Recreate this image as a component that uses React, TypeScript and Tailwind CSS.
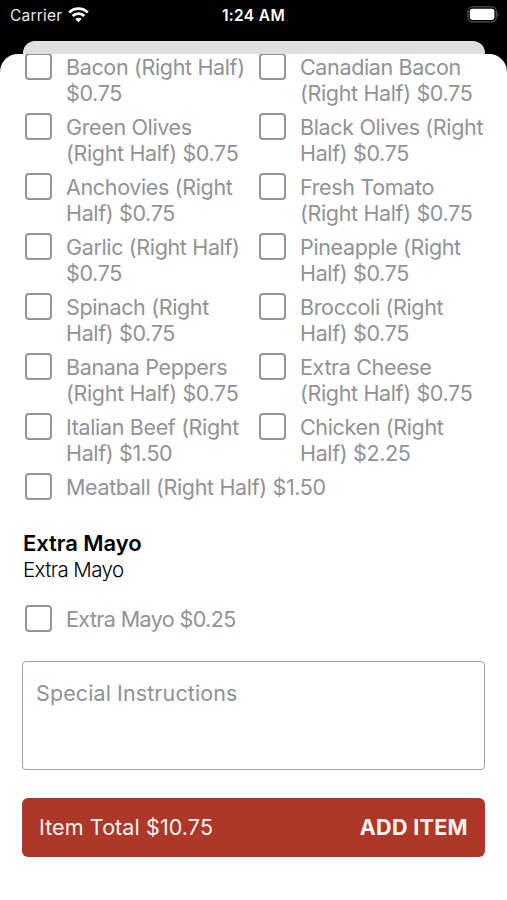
import React, { useState } from 'react';

type Topping = { id: string; lines: string[] };

const toppings: Topping[] = [
    { id: 'bacon', lines: ['Bacon (Right Half)', '$0.75'] },
    { id: 'canadian-bacon', lines: ['Canadian Bacon', '(Right Half) $0.75'] },
    { id: 'green-olives', lines: ['Green Olives', '(Right Half) $0.75'] },
    { id: 'black-olives', lines: ['Black Olives (Right', 'Half) $0.75'] },
    { id: 'anchovies', lines: ['Anchovies (Right', 'Half) $0.75'] },
    { id: 'tomato', lines: ['Fresh Tomato', '(Right Half) $0.75'] },
    { id: 'garlic', lines: ['Garlic (Right Half)', '$0.75'] },
    { id: 'pineapple', lines: ['Pineapple (Right', 'Half) $0.75'] },
    { id: 'spinach', lines: ['Spinach (Right', 'Half) $0.75'] },
    { id: 'broccoli', lines: ['Broccoli (Right', 'Half) $0.75'] },
    { id: 'banana-peppers', lines: ['Banana Peppers', '(Right Half) $0.75'] },
    { id: 'extra-cheese', lines: ['Extra Cheese', '(Right Half) $0.75'] },
    { id: 'italian-beef', lines: ['Italian Beef (Right', 'Half) $1.50'] },
    { id: 'chicken', lines: ['Chicken (Right', 'Half) $2.25'] },
    { id: 'meatball', lines: ['Meatball (Right Half) $1.50'] },
];

function StatusBar() {
    return (
        <div className="grid h-[30px] shrink-0 grid-cols-3 items-center pr-2 pl-[10px] text-[#e8e8e8]">
            <div className="flex items-center gap-[6px]">
                <span className="pt-px text-[15.5px] tracking-[0.2px]">Carrier</span>
                <svg width="21" height="16" viewBox="0 0 21 16" fill="none" stroke="#ffffff">
                    <path d="M1.2 5.4a13.2 13.2 0 0 1 18.6 0" strokeWidth="2.8" />
                    <path d="M4.6 9a8.4 8.4 0 0 1 11.8 0" strokeWidth="2.7" />
                    <path d="M10.5 15.2 7.3 12a4.6 4.6 0 0 1 6.4 0z" fill="#ffffff" stroke="none" />
                </svg>
            </div>
            <span className="pt-px pr-[2px] text-center text-[15.5px] font-semibold tracking-[0.35px] whitespace-nowrap text-white">1:24 AM</span>
            <div className="flex justify-end pb-[2px]">
                <svg width="32" height="17" viewBox="0 0 32 17" fill="none">
                    <rect x="0.9" y="0.9" width="28.4" height="15" rx="4.6" stroke="#4f4f4f" strokeWidth="1.3" />
                    <rect x="2.8" y="2.8" width="24.6" height="11.2" rx="2.4" fill="#ffffff" />
                    <path d="M30.5 6.2v4.4c.8-.4 1.2-1.3 1.2-2.2s-.4-1.8-1.2-2.2z" fill="#4f4f4f" />
                </svg>
            </div>
        </div>
    );
}

type CheckItemProps = {
    lines: string[];
    checked: boolean;
    onToggle: () => void;
    className?: string;
};

function CheckItem({ lines, checked, onToggle, className = '' }: CheckItemProps) {
    return (
        <label className={`flex items-start gap-[14px] ${className}`}>
            <input
                type="checkbox"
                checked={checked}
                onChange={onToggle}
                className="h-[27px] w-[27px] shrink-0 appearance-none rounded-[4px] border-2 border-[#969696] bg-white checked:bg-[#ad3829]"
            />
            <span className="pt-px text-[21.5px] leading-[26.25px] tracking-[-0.35px] whitespace-nowrap text-[#929295]">
                {lines.map((line) => (
                    <span key={line} className="block">{line}</span>
                ))}
            </span>
        </label>
    );
}

export default function App(): React.JSX.Element {
    const [selected, setSelected] = useState<string[]>([]);
    const [notes, setNotes] = useState('');

    const toggle = (id: string) => {
        setSelected((prev) => (prev.includes(id) ? prev.filter((s) => s !== id) : [...prev, id]));
    };

    return (
        <div className="flex h-[900px] w-full flex-col overflow-hidden bg-black font-['Inter','Liberation_Sans',sans-serif]">
            <StatusBar />

            {/* edge of the sheet underneath */}
            <div className="mr-[22px] ml-[23px] mt-[11px] h-[14px] shrink-0 rounded-t-[12px] bg-[#dfdfdf]" />

            <div className="-mt-px flex-1 overflow-hidden rounded-t-[18px] bg-white px-[22px]">
                <div className="-mt-px grid auto-rows-[53px] grid-cols-[234px_1fr] gap-y-[7px] pl-[3px]">
                    {toppings.map((t) => (
                        <CheckItem
                            key={t.id}
                            lines={t.lines}
                            checked={selected.includes(t.id)}
                            onToggle={() => toggle(t.id)}
                        />
                    ))}
                </div>

                <h2 className="mt-1 pl-px text-[22px] leading-[26px] font-semibold tracking-[-0.05px] text-black">Extra Mayo</h2>
                <p className="mt-px pl-px text-[20.5px] leading-[26px] font-light tracking-[-0.6px] text-black">Extra Mayo</p>

                <CheckItem
                    className="mt-[22px] pl-[3px] *:last:pt-px *:last:tracking-[-0.6px]"
                    lines={['Extra Mayo $0.25']}
                    checked={selected.includes('extra-mayo')}
                    onToggle={() => toggle('extra-mayo')}
                />

                <textarea
                    value={notes}
                    onChange={(e) => setNotes(e.target.value)}
                    placeholder="Special Instructions"
                    className="mt-[29px] block h-[109px] w-[463px] resize-none rounded-[4px] border-[1.5px] border-[#a0a0a0] px-[13px] py-[18px] text-[21.5px] leading-[26px] tracking-[0.1px] placeholder:text-[#929295]"
                />

                <button
                    type="button"
                    className="mt-[28px] flex h-[59px] w-[463px] items-center justify-between rounded-[6px] bg-[#ad3829] px-[17px] pb-px text-[21.5px] leading-[26px] text-[#fff3f0]"
                >
                    <span className="tracking-[0.1px]">Item Total $10.75</span>
                    <span className="font-bold tracking-[0.33px]">ADD ITEM</span>
                </button>
            </div>
        </div>
    );
}
